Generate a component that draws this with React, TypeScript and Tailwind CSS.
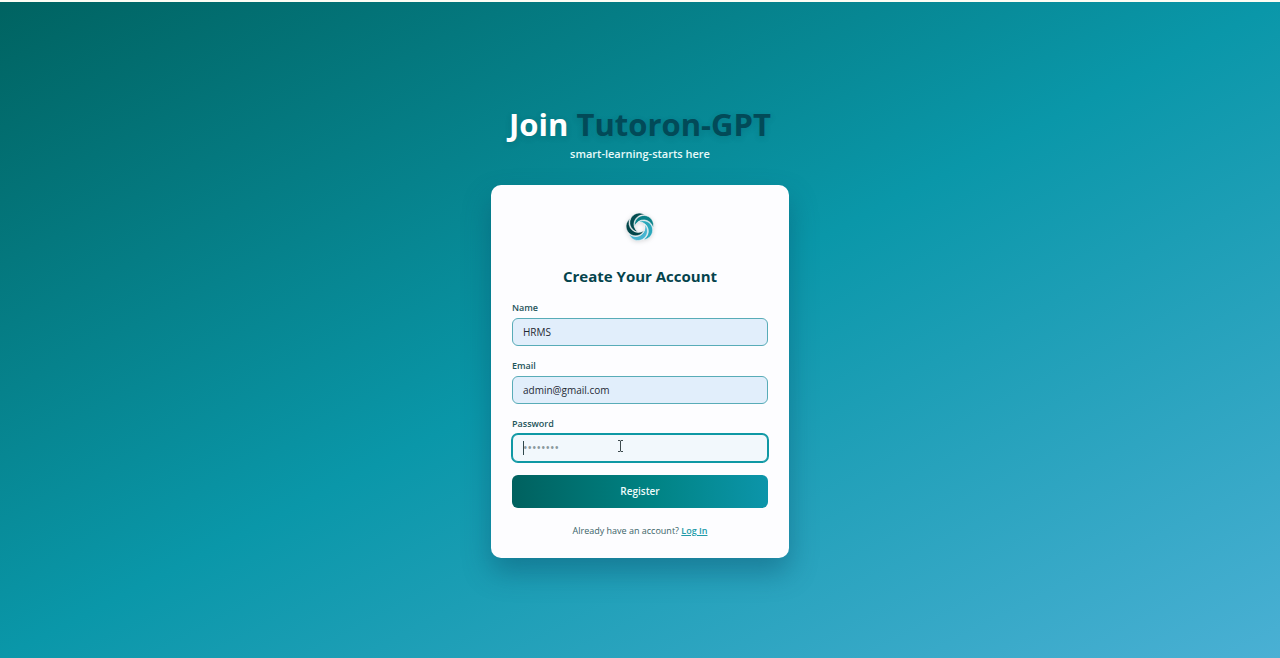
import { useState } from "react";

const BLADES = [
  { angle: 0, color: "#024c50" },
  { angle: 72, color: "#0a8188" },
  { angle: 144, color: "#2aa7bb" },
  { angle: 216, color: "#48b4d0" },
  { angle: 288, color: "#03464a" },
];

function Logo() {
  return (
    <svg viewBox="-14 -14 28 28" className="size-7 drop-shadow-sm" role="img" aria-label="Tutoron-GPT">
      {BLADES.map((blade) => (
        <path
          key={blade.angle}
          d="M-2 5A9.5 9.5 0 1 1 5-12A9.4 9.4 0 0 0-2 5Z"
          transform={`rotate(${blade.angle})`}
          fill={blade.color}
          stroke="#fdfdff"
          strokeWidth="0.5"
        />
      ))}
    </svg>
  );
}

const labelClass = "block text-[9px] leading-4 font-semibold text-[#1d545a]";
const inputClass =
  "block h-7 w-full rounded-md border px-[10px] text-[10px] text-[#1f2933] outline-none placeholder:text-[12px] placeholder:text-[#8a9a9c]";

export default function App() {
  const [name, setName] = useState("HRMS");
  const [email, setEmail] = useState("admin@gmail.com");
  const [password, setPassword] = useState("");

  return (
    <div className="flex min-h-screen flex-col border-t-2 border-[#fdfdf4] font-['Open_Sans','Noto_Sans',sans-serif]">
      <main className="flex grow flex-col items-center justify-center bg-[linear-gradient(to_bottom_right,#006361,#0a97a9,#4ab0d4)] pt-[2px]">
        <h1 className="text-[31px] leading-10 font-bold text-white [text-shadow:0_2px_6px_rgba(0,40,50,0.15)]">
          Join <span className="text-[#024a58]">Tutoron-GPT</span>
        </h1>
        <p className="mt-[2px] text-[11px] leading-4 font-semibold text-[#e6fafa]">smart-learning-starts here</p>

        <section className="mt-[23px] flex w-[298px] flex-col items-center rounded-[10px] bg-[#fdfdff] px-[21px] pt-7 pb-[19px] shadow-[0_14px_28px_rgba(10,70,100,0.4)]">
          <Logo />
          <h2 className="mt-[23px] text-[15px] leading-6 font-bold text-[#04434c]">Create Your Account</h2>

          <form className="mt-3 w-full" onSubmit={(e) => e.preventDefault()}>
            <label htmlFor="name" className={labelClass}>
              Name
            </label>
            <input
              id="name"
              value={name}
              onChange={(e) => setName(e.target.value)}
              className={`${inputClass} mt-[2px] border-[#58acb8] bg-[#e1eefb]`}
            />
            <label htmlFor="email" className={`${labelClass} mt-3`}>
              Email
            </label>
            <input
              id="email"
              type="email"
              value={email}
              onChange={(e) => setEmail(e.target.value)}
              className={`${inputClass} mt-[2px] border-[#58acb8] bg-[#e1eefb]`}
            />
            <label htmlFor="password" className={`${labelClass} mt-3`}>
              Password
            </label>
            <div className="relative mt-[2px]">
              <input
                id="password"
                type="password"
                placeholder="••••••••"
                value={password}
                onChange={(e) => setPassword(e.target.value)}
                className={`${inputClass} border-[#0e98a4] bg-[#f2f8fc] caret-transparent ring-1 ring-[#0e98a4]`}
              />
              <span className="absolute top-[7px] left-[11px] h-[14px] w-px bg-[#30484c]" />
              <svg
                viewBox="0 0 7 12"
                className="absolute top-[6px] left-[105px] h-3 w-[7px]"
                fill="none"
                stroke="#3d4a4d"
                aria-hidden="true"
              >
                <path d="M1 .5H3L3.5 1L4 .5H6M3.5 1V11M1 11.5H3L3.5 11L4 11.5H6" />
              </svg>
            </div>
            <button
              type="submit"
              className="mt-[13px] block h-[33px] w-full rounded-md bg-[linear-gradient(90deg,#00615f_0%,#008384_55%,#0c95aa_100%)] text-[10px] font-semibold text-[#effcfc]"
            >
              Register
            </button>
          </form>

          <p className="mt-[15px] text-[9px] leading-4 text-[#3b6468]">
            Already have an account?{" "}
            <a href="#login" className="font-semibold text-[#219aa8] underline">
              Log In
            </a>
          </p>
        </section>
      </main>
    </div>
  );
}
